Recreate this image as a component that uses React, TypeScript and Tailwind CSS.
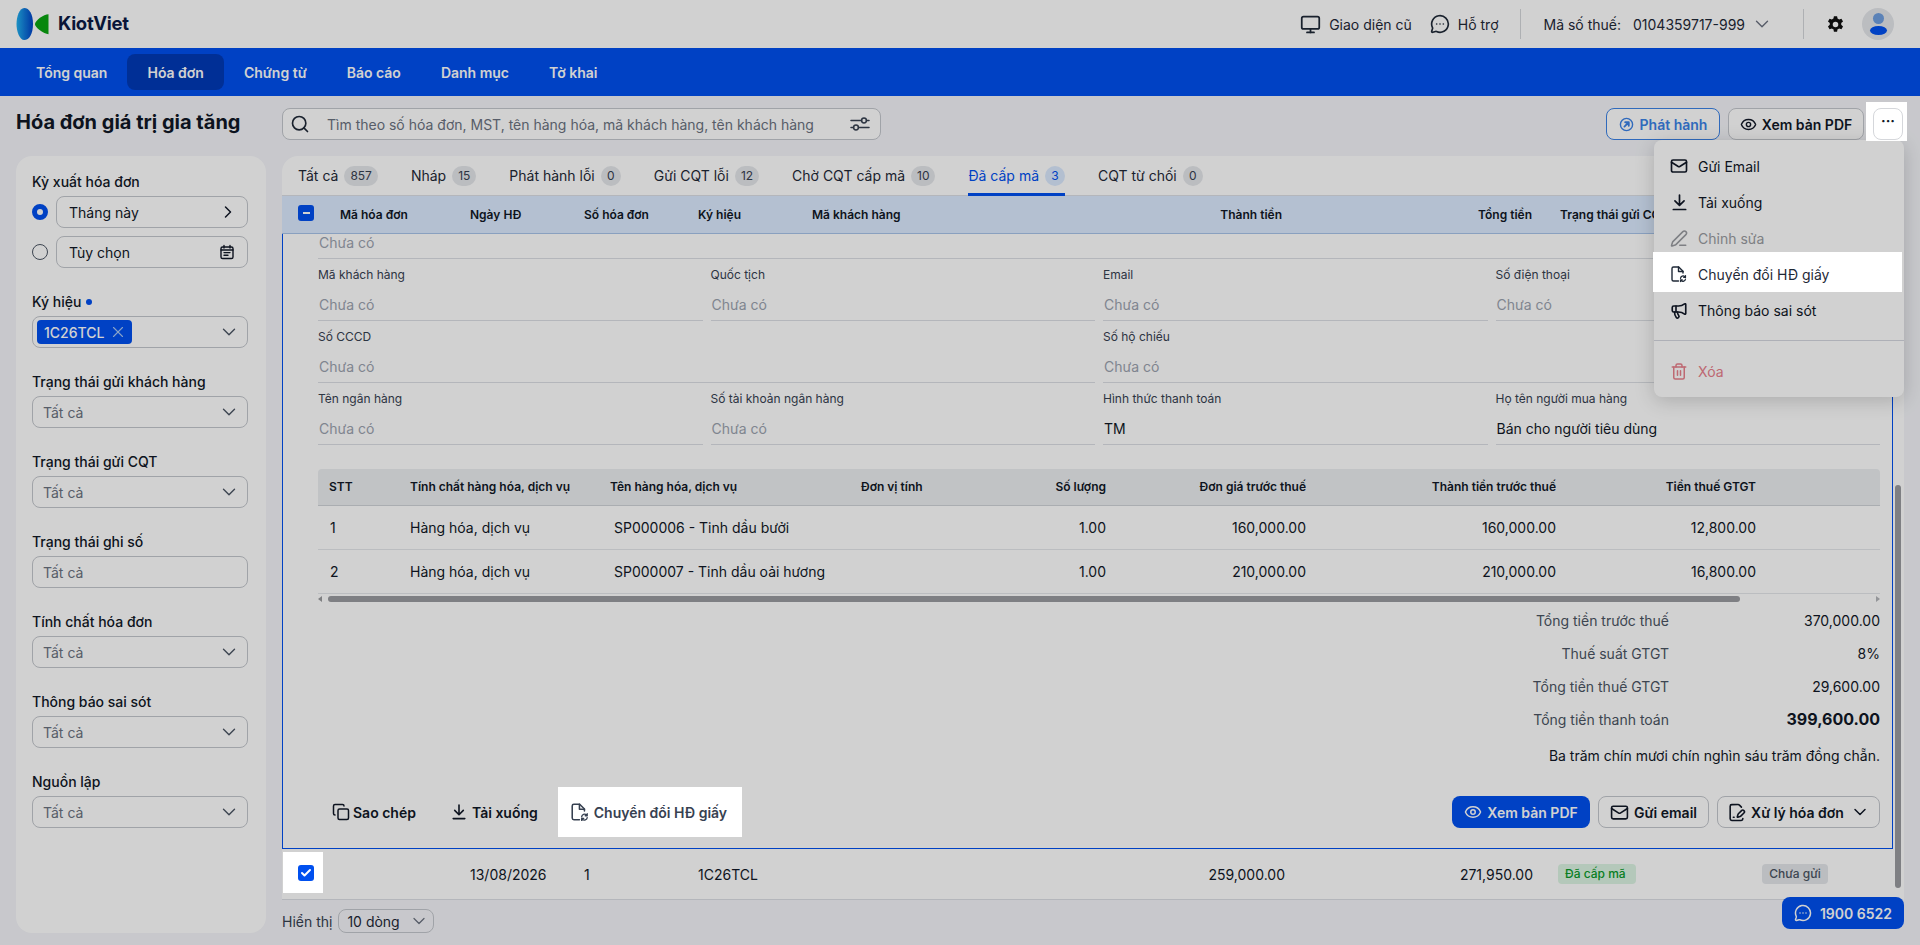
import React from "react";
import {
  Monitor, MessageCircleMore, ChevronDown, ChevronRight, Search, X, Check, Mail,
  PenLine, Megaphone, Trash2, Copy, Eye, FilePenLine,
} from "lucide-react";

const FileSwap = ({ className = "" }: { className?: string }) => (
  <svg viewBox="0 0 18 18" className={className} fill="none" stroke="currentColor" strokeWidth="1.4" strokeLinecap="round" strokeLinejoin="round">
    <path d="M8.5 16H3.5A1.5 1.5 0 0 1 2 14.5v-11A1.5 1.5 0 0 1 3.5 2h5.2L13 6.3V8" />
    <path d="M8.5 2v4.5H13" />
    <path d="M10.5 13.4a2.6 2.6 0 0 1 4.4-1.7l.6.6M15.5 10.6v1.8h-1.8M15.5 14a2.6 2.6 0 0 1-4.4 1.5l-.6-.6M10.5 16.6v-1.8h1.8" strokeWidth="1.2" />
  </svg>
);

const CalendarNote = ({ className = "" }: { className?: string }) => (
  <svg viewBox="0 0 16 16" className={className} fill="none" stroke="currentColor" strokeWidth="1.4" strokeLinecap="round">
    <rect x="2" y="3" width="12" height="11.5" rx="1.6" />
    <path d="M5 1.5v2.5M11 1.5v2.5M2 6h12" />
    <path d="M5 8.6h6M5 11.2h4" />
  </svg>
);

const PublishIcon = ({ className = "" }: { className?: string }) => (
  <svg viewBox="0 0 16 16" className={className} fill="none" stroke="currentColor" strokeWidth="1.5" strokeLinecap="round" strokeLinejoin="round">
    <circle cx="8" cy="8" r="6.5" />
    <path d="M5.8 10.2 10.2 5.8M6.6 5.6h3.8v3.8" strokeWidth="2" />
  </svg>
);

const DownloadBar = ({ className = "" }: { className?: string }) => (
  <svg viewBox="0 0 16 16" className={className} fill="none" stroke="currentColor" strokeWidth="1.6" strokeLinecap="round" strokeLinejoin="round">
    <path d="M8 1v9.5M3.7 6.4 8 10.7l4.3-4.3M2.2 14.6h11.6" />
  </svg>
);

const Sliders = ({ className = "" }: { className?: string }) => (
  <svg viewBox="0 0 20 16" className={className} fill="none" stroke="currentColor" strokeWidth="1.5" strokeLinecap="round">
    <path d="M1 4.5h10.5M16.5 4.5H19M1 11.5h2.5M8.500 11.5H19" />
    <circle cx="14" cy="4.5" r="2.4" />
    <circle cx="6" cy="11.5" r="2.4" />
  </svg>
);

const Logo = () => (
  <svg viewBox="0 0 34 34" className="h-[33px] w-[34px]">
    <defs>
      <linearGradient id="kvb" x1="0" y1="0" x2="1" y2="0">
        <stop offset="0" stopColor="#22b1ee" />
        <stop offset="1" stopColor="#0043c8" />
      </linearGradient>
    </defs>
    <path d="M8 0C13 0 17 6 17 16.5C17 27 13 33 8 33C3 33 0 24 0 16.5C0 9 3 0 8 0Z" fill="url(#kvb)" />
    <path d="M33 6.5C33 6.5 33 27 33 27C28 27 19 20 19 16.8C19 13 28 6.5 33 6.5Z" fill="#0aa512" />
  </svg>
);

const Gear = () => (
  <svg viewBox="0 0 24 24" className="h-[19px] w-[19px]" fill="#111">
    <path fillRule="evenodd" d="M10 1.5h4l.6 3a8 8 0 0 1 2 1.15l2.9-1 2 3.5-2.3 2a8 8 0 0 1 0 2.3l2.3 2-2 3.5-2.9-1a8 8 0 0 1-2 1.15l-.6 3h-4l-.6-3a8 8 0 0 1-2-1.15l-2.9 1-2-3.5 2.3-2a8 8 0 0 1 0-2.3l-2.3-2 2-3.5 2.9 1a8 8 0 0 1 2-1.15ZM12 8.5a3.5 3.5 0 1 0 0 7 3.5 3.5 0 0 0 0-7Z" />
  </svg>
);

const nav = ["Tổng quan", "Hóa đơn", "Chứng từ", "Báo cáo", "Danh mục", "Tờ khai"];
const tabs: [string, string][] = [["Tất cả", "857"], ["Nháp", "15"], ["Phát hành lỗi", "0"], ["Gửi CQT lỗi", "12"], ["Chờ CQT cấp mã", "10"], ["Đã cấp mã", "3"], ["CQT từ chối", "0"]];
const filters = ["Trạng thái gửi khách hàng", "Trạng thái gửi CQT", "Trạng thái ghi số", "Tính chất hóa đơn", "Thông báo sai sót", "Nguồn lập"];
const firstRow = [["Mã khách hàng", "Chưa có"], ["Quốc tịch", "Chưa có"], ["Email", "Chưa có"], ["Số điện thoại", "Chưa có"]];

const Field = ({ label, value, dark, span }: { label: string; value: string; dark?: boolean; span?: boolean }) => (
  <div className={`h-[62px] border-b border-[#dcdfe4] ${span ? "col-span-2" : ""}`}>
    <div className="mt-[8px] h-[16px] text-[12px] leading-[16px] text-[#374151]">{label}</div>
    <div className={`mt-[12px] pl-[1px] text-[14px] leading-[20px] ${dark ? "text-[#111827]" : "text-[#9ca3af]"}`}>{value}</div>
  </div>
);

const items = [
  ["1", "SP000006 - Tinh dầu bưởi", "160,000.00", "160,000.00", "12,800.00"],
  ["2", "SP000007 - Tinh dầu oải hương", "210,000.00", "210,000.00", "16,800.00"],
];

const Total = ({ label, value }: { label: string; value: string }) => (
  <div className="mb-[11px] flex h-[22px] items-center justify-end text-[14px]">
    <span className="text-[#4b5563]">{label}</span>
    <span className="w-[211px] text-right text-[#111827]">{value}</span>
  </div>
);

const OutlineBtn = ({ children, className = "" }: { children: React.ReactNode; className?: string }) => (
  <button className={`flex h-[32px] items-center justify-center gap-[5px] rounded-lg border border-[#c4c7cd] bg-white text-[14px] font-semibold text-[#111827] ${className}`}>{children}</button>
);

const MenuItem = ({ icon, label, className = "" }: { icon: React.ReactNode; label: string; className?: string }) => (
  <div className={`flex h-[36px] items-center gap-[10px] px-4 text-[14px] ${className}`}>
    <span className="flex w-[18px] justify-center">{icon}</span>
    {label}
  </div>
);

export default function App() {
  return (
    <div className="relative flex h-[945px] flex-col overflow-hidden bg-[#f4f5f9] font-[family-name:Inter,sans-serif] text-[#111827]">
      {/* top bar */}
      <header className="flex h-[48px] shrink-0 items-center justify-between bg-white pl-4 pr-[26px]">
        <div className="flex items-center gap-[8px]">
          <Logo />
          <span className="text-[18.5px] font-bold tracking-[-0.3px] text-[#0b1a45]">KiotViet</span>
        </div>
        <div className="flex items-center text-[14px] text-[#1f2937]">
          <Monitor className="h-[21px] w-[21px]" />
          <span className="ml-[8px]">Giao diện cũ</span>
          <MessageCircleMore className="ml-[18px] h-[20px] w-[20px]" />
          <span className="ml-[8px]">Hỗ trợ</span>
          <div className="ml-[21px] h-[30px] w-px bg-[#d5d7db]" />
          <span className="ml-[23px]">Mã số thuế:</span>
          <span className="ml-[12px]">0104359717-999</span>
          <ChevronDown className="ml-[6px] h-[22px] w-[22px] text-[#6b7280]" strokeWidth={1.5} />
          <div className="ml-[30px] h-[30px] w-px bg-[#d5d7db]" />
          <span className="ml-[22px]"><Gear /></span>
          <div className="relative ml-[17px] flex h-[32px] w-[32px] flex-col items-center justify-center overflow-hidden rounded-full bg-[#e5e7eb]">
            <div className="h-[11px] w-[11px] rounded-full bg-[#6f9fe0]" />
            <div className="mt-[2px] h-[9px] w-[17px] rounded-[50%] bg-[#0050ef]" />
          </div>
        </div>
      </header>

      {/* nav */}
      <nav className="flex h-[48px] shrink-0 items-center bg-[#0050ef] pl-4">
        {nav.map((n, i) => (
          <div key={n} className={`flex h-[36px] items-center rounded-lg px-5 text-[14px] font-semibold text-white ${i === 1 ? "bg-[#003ab8]" : ""}`}>{n}</div>
        ))}
      </nav>

      {/* toolbar */}
      <div className="flex h-[60px] shrink-0 items-start pl-4 pr-4 pt-3">
        <h1 className="w-[266px] text-[20px] font-bold leading-[28px] text-[#111827]">Hóa đơn giá trị gia tăng</h1>
        <div className="flex h-[32px] w-[599px] items-center rounded-lg border border-[#c4c7cd] bg-white pl-[7px] pr-[10px] text-[14px] text-[#6b7280]">
          <Search className="h-[20px] w-[20px] text-[#1f2937]" />
          <span className="ml-[17px] flex-1 whitespace-nowrap">Tìm theo số hóa đơn, MST, tên hàng hóa, mã khách hàng, tên khách hàng</span>
          <Sliders className="h-[16px] w-[20px] text-[#374151]" />
        </div>
        <div className="ml-auto flex items-start">
          <button className="flex h-[32px] w-[114px] items-center justify-center gap-[6px] rounded-lg border border-[#3b82e6] bg-white text-[14px] font-semibold text-[#3b82e6]">
            <PublishIcon className="h-[15px] w-[15px]" />Phát hành
          </button>
          <OutlineBtn className="ml-[8px] w-[136px]"><Eye className="h-[17px] w-[17px]" />Xem bản PDF</OutlineBtn>
          <div className="relative z-50 -mr-[3px] -mt-[6px] ml-[2px] bg-white pb-[1px] pl-[7px] pr-[4px] pt-[6px]">
            <button className="flex h-[32px] w-[30px] items-center justify-center rounded-lg border border-[#d5d7db] bg-white pb-[6px] text-[14px] font-bold leading-none">···</button>
          </div>
        </div>
      </div>

      {/* body */}
      <div className="flex min-h-0 flex-1 pb-3 pl-4 pr-4">
        <aside className="flex w-[250px] shrink-0 flex-col rounded-2xl bg-white pb-4 pl-4 pr-[18px] pt-4">
          <div className="text-[14px] font-medium leading-[20px]">Kỳ xuất hóa đơn</div>
          <div className="mt-1 flex items-center gap-2">
            <div className="h-[16px] w-[16px] rounded-full border-[5px] border-[#0050ef] bg-white" />
            <div className="flex h-[32px] flex-1 items-center justify-between rounded-lg border border-[#c4c7cd] pl-[12px] pr-[9px] text-[14px]">Tháng này<ChevronRight className="h-[20px] w-[20px]" strokeWidth={1.8} /></div>
          </div>
          <div className="mt-2 flex items-center gap-2">
            <div className="h-[16px] w-[16px] rounded-full border-[1.5px] border-[#4b5563] bg-white" />
            <div className="flex h-[32px] flex-1 items-center justify-between rounded-lg border border-[#c4c7cd] pl-[12px] pr-[12px] text-[14px]">Tùy chọn<CalendarNote className="h-[16px] w-[16px]" /></div>
          </div>
          <div className="mt-6 flex items-center gap-[5px] text-[14px] font-medium leading-[20px]">Ký hiệu<span className="h-[6px] w-[6px] rounded-full bg-[#0050ef]" /></div>
          <div className="mt-1 flex h-[32px] items-center justify-between rounded-lg border border-[#c4c7cd] pl-[4px] pr-[7px]">
            <span className="flex h-[24px] w-[95px] items-center gap-[5px] rounded-[4px] bg-[#0050ef] pl-[7px] text-[14px] font-medium text-white">1C26TCL<X className="h-[18px] w-[18px] text-[#a8c8f5]" strokeWidth={1.5} /></span>
            <ChevronDown className="h-[22px] w-[22px] text-[#4b5563]" strokeWidth={1.5} />
          </div>
          {filters.map((f, i) => (
            <React.Fragment key={f}>
              <div className="mt-6 text-[14px] font-medium leading-[20px]">{f}</div>
              <div className="mt-1 flex h-[32px] items-center justify-between rounded-lg border border-[#c4c7cd] pl-[10px] pr-[7px] text-[14px] text-[#6b7280]">
                Tất cả{i !== 2 && <ChevronDown className="h-[22px] w-[22px] text-[#4b5563]" strokeWidth={1.5} />}
              </div>
            </React.Fragment>
          ))}
        </aside>

        <main className="ml-4 flex min-w-0 flex-1 flex-col">
          <section className="flex flex-col rounded-t-2xl bg-white">
            {/* tabs */}
            <div className="flex h-[40px] items-stretch border-b border-[#dcdfe4] pl-4 text-[14px]">
              {tabs.map(([t, c], i) => (
                <div key={t} className={`relative mr-[33px] flex items-center gap-[6px] ${i === 5 ? "text-[#0050ef]" : "text-[#1f2937]"}`}>
                  {t}
                  <span className={`flex h-[20px] min-w-[20px] items-center justify-center rounded-full px-[6px] text-[12px] ${i === 5 ? "bg-[#dbeafe] text-[#0050ef]" : "bg-[#e5e7eb] text-[#374151]"}`}>{c}</span>
                  {i === 5 && <span className="absolute -bottom-px left-0 right-0 h-[3px] bg-[#0050ef]" />}
                </div>
              ))}
            </div>
            {/* header */}
            <div className="flex h-[38px] items-center whitespace-nowrap border-b border-[#a8c4ea] bg-[#dcebff] pl-4 text-[12px] font-semibold">
              <span className="mb-[3px] flex h-[16px] w-[16px] items-center justify-center rounded-[3px] bg-[#0050ef]"><span className="h-[2px] w-[7px] bg-white" /></span>
              <span className="ml-[26px] w-[130px]">Mã hóa đơn</span>
              <span className="w-[114px]">Ngày HĐ</span>
              <span className="w-[114px]">Số hóa đơn</span>
              <span className="w-[114px]">Ký hiệu</span>
              <span className="w-[110px]">Mã khách hàng</span>
              <span className="w-[360px] text-right">Thành tiền</span>
              <span className="w-[250px] text-right">Tổng tiền</span>
              <span className="ml-[28px]">Trạng thái gửi CQT</span>
            </div>
            <div className="flex">
              <div className="flex min-w-0 flex-1 flex-col">
                {/* expanded row */}
                <div className="flex w-[1611px] flex-col border-b border-l border-r border-[#0050ef] pl-[35px] pr-[12px]">
                  <div className="h-[25px] border-b border-[#dcdfe4] pl-[1px] pt-[1px] text-[14px] leading-[16px] text-[#9ca3af]">Chưa có</div>
                  <div className="grid grid-cols-4 gap-x-2">
                    {firstRow.map(([l, v]) => <Field key={l} label={l} value={v} />)}
                    <Field label="Số CCCD" value="Chưa có" span />
                    <Field label="Số hộ chiếu" value="Chưa có" span />
                    <Field label="Tên ngân hàng" value="Chưa có" />
                    <Field label="Số tài khoản ngân hàng" value="Chưa có" />
                    <Field label="Hình thức thanh toán" value="TM" dark />
                    <Field label="Họ tên người mua hàng" value="Bán cho người tiêu dùng" dark />
                  </div>
                  {/* item table */}
                  <div className="mt-[24px] grid grid-cols-[81px_200px_251px_130px_126px_200px_250px_200px_1fr] text-[14px]">
                    {["STT", "Tính chất hàng hóa, dịch vụ", "Tên hàng hóa, dịch vụ", "Đơn vị tính", "Số lượng", "Đơn giá trước thuế", "Thành tiền trước thuế", "Tiền thuế GTGT", ""].map((h, i) => (
                      <div key={i} className={`flex h-[37px] items-center border-b border-[#d0d3d8] bg-[#eceef1] text-[12px] font-semibold ${i <= 3 ? "pl-[11px]" : "justify-end"} ${i === 0 ? "rounded-tl" : ""} ${i === 8 ? "rounded-tr" : ""}`}>{h}</div>
                    ))}
                    {items.map((r) => (
                      <React.Fragment key={r[0]}>
                        <div className="flex h-[44px] items-center border-b border-[#e5e7eb] pl-[12px]">{r[0]}</div>
                        <div className="flex h-[44px] items-center border-b border-[#e5e7eb] pl-[11px]">Hàng hóa, dịch vụ</div>
                        <div className="flex h-[44px] items-center whitespace-nowrap border-b border-[#e5e7eb] pl-[15px]">{r[1]}</div>
                        <div className="h-[44px] border-b border-[#e5e7eb]" />
                        <div className="flex h-[44px] items-center justify-end border-b border-[#e5e7eb]">1.00</div>
                        <div className="flex h-[44px] items-center justify-end border-b border-[#e5e7eb]">{r[2]}</div>
                        <div className="flex h-[44px] items-center justify-end border-b border-[#e5e7eb]">{r[3]}</div>
                        <div className="flex h-[44px] items-center justify-end border-b border-[#e5e7eb]">{r[4]}</div>
                        <div className="h-[44px] border-b border-[#e5e7eb]" />
                      </React.Fragment>
                    ))}
                  </div>
                  {/* horizontal scrollbar */}
                  <div className="mt-[2px] flex h-[6px] items-center">
                    <span className="h-0 w-0 border-y-[3px] border-r-[4px] border-y-transparent border-r-[#9a9b9e]" />
                    <span className="ml-[6px] h-[6px] w-[1412px] rounded-full bg-[#9a9ca0]" />
                    <span className="ml-auto h-0 w-0 border-y-[3px] border-l-[4px] border-y-transparent border-l-[#b4b6ba]" />
                  </div>
                  {/* totals */}
                  <div className="pt-[7px]">
                    <Total label="Tổng tiền trước thuế" value="370,000.00" />
                    <Total label="Thuế suất GTGT" value="8%" />
                    <Total label="Tổng tiền thuế GTGT" value="29,600.00" />
                    <div className="-mt-[1px] flex h-[24px] items-center justify-end text-[14px]">
                      <span className="text-[#4b5563]">Tổng tiền thanh toán</span>
                      <span className="w-[211px] text-right text-[16px] font-bold text-[#111827]">399,600.00</span>
                    </div>
                    <div className="mt-[14px] h-[22px] text-right text-[14px] leading-[22px]">Ba trăm chín mươi chín nghìn sáu trăm đồng chẵn.</div>
                  </div>
                  {/* actions */}
                  <div className="mt-[29px] flex items-center pb-[20px]">
                    <button className="ml-[14px] flex h-[32px] items-center gap-[3px] text-[14px] font-semibold"><Copy className="h-[18px] w-[18px]" />Sao chép</button>
                    <button className="ml-[35px] flex h-[32px] items-center gap-[5px] text-[14px] font-semibold"><DownloadBar className="h-[16px] w-[16px]" />Tải xuống</button>
                    <div className="relative z-50 -my-[9px] ml-[20px] flex h-[50px] w-[184px] items-center gap-[4px] bg-white pl-[12px] text-[14px] font-semibold text-[#374151]">
                      <FileSwap className="h-[20px] w-[20px]" />Chuyển đổi HĐ giấy
                    </div>
                    <button className="ml-auto flex h-[32px] w-[138px] items-center justify-center gap-[5px] rounded-lg bg-[#0050ef] text-[14px] font-semibold text-white"><Eye className="h-[18px] w-[18px]" />Xem bản PDF</button>
                    <OutlineBtn className="ml-[8px] w-[111px]"><Mail className="h-[19px] w-[19px]" />Gửi email</OutlineBtn>
                    <OutlineBtn className="ml-[8px] w-[163px]"><FilePenLine className="h-[19px] w-[19px]" />Xử lý hóa đơn<ChevronDown className="ml-[1px] h-[20px] w-[20px]" strokeWidth={1.8} /></OutlineBtn>
                  </div>
                </div>
                {/* next row */}
                <div className="flex h-[51px] border-b border-[#dcdfe4] text-[14px]">
                  <div className="relative z-50 ml-[1px] mt-[3px] flex h-[41px] w-[40px] items-center bg-white pl-[15px]">
                    <span className="flex h-[16px] w-[16px] items-center justify-center rounded-[3px] bg-[#0050ef]"><Check className="h-[12px] w-[12px] text-white" strokeWidth={4} /></span>
                  </div>
                  <div className="ml-[147px] flex flex-1 items-center">
                    <span className="w-[114px] shrink-0">13/08/2026</span>
                    <span className="w-[114px] shrink-0">1</span>
                    <span className="w-[114px] shrink-0">1C26TCL</span>
                    <span className="w-[473px] shrink-0 text-right">259,000.00</span>
                    <span className="w-[248px] shrink-0 text-right">271,950.00</span>
                    <span className="ml-[25px] flex h-[20px] w-[78px] shrink-0 items-center rounded-[4px] bg-[#dcf5e3] pl-[7px] text-[12px] font-medium text-[#0a9a2a]">Đã cấp mã</span>
                    <span className="ml-[126px] flex h-[20px] w-[66px] shrink-0 items-center justify-center rounded-[4px] bg-[#e5e7eb] text-[12px] font-medium text-[#4b5563]">Chưa gửi</span>
                  </div>
                </div>
              </div>
              {/* vertical scrollbar */}
              <div className="flex w-[11px] shrink-0 flex-col items-center pt-[251px]">
                <div className="ml-[-1px] h-[403px] w-[6px] rounded-full bg-[#9a9ca0]" />
              </div>
            </div>
          </section>
          <div className="mt-[9px] flex items-center text-[14px] text-[#374151]">
            Hiển thị
            <div className="ml-[6px] flex h-[24px] w-[96px] items-center justify-between rounded-lg border border-[#c4c7cd] pl-[8px] pr-[4px] text-[#1f2937]">10 dòng<ChevronDown className="h-[20px] w-[20px] text-[#6b7280]" strokeWidth={1.5} /></div>
          </div>
        </main>
      </div>

      {/* dropdown menu */}
      <div className="absolute right-[16px] top-[140px] w-[250px] rounded-lg bg-white py-2 shadow-[0_4px_20px_rgba(0,0,0,0.18)]">
        <MenuItem icon={<Mail className="h-[20px] w-[20px]" strokeWidth={2.2} />} label="Gửi Email" />
        <MenuItem icon={<DownloadBar className="h-[17px] w-[17px]" />} label="Tải xuống" />
        <MenuItem icon={<PenLine className="h-[19px] w-[19px]" />} label="Chỉnh sửa" className="text-[#9a9ca1]" />
        <MenuItem icon={<FileSwap className="h-[20px] w-[20px]" />} label="Chuyển đổi HĐ giấy" className="relative z-50 -ml-px -mt-[4px] h-[40px] w-[249px] bg-white pl-[17px] pt-[4px] text-[#1f2937]" />
        <MenuItem icon={<Megaphone className="h-[19px] w-[19px]" strokeWidth={2.2} />} label="Thông báo sai sót" />
        <div className="mb-[12px] mt-[12px] h-px bg-[#d5d7e0]" />
        <MenuItem icon={<Trash2 className="h-[19px] w-[19px]" />} label="Xóa" className="text-[#e8808c]" />
      </div>

      {/* hotline */}
      <div className="absolute right-[16px] top-[897px] flex h-[32px] w-[122px] items-center justify-center gap-[8px] rounded-lg bg-[#0050ef] text-[14px] font-semibold text-white">
        <MessageCircleMore className="h-[18px] w-[18px]" />1900 6522
      </div>

      {/* dim layer of the product tour */}
      <div className="absolute inset-0 z-40 bg-black/[0.18]" />
    </div>
  );
}
